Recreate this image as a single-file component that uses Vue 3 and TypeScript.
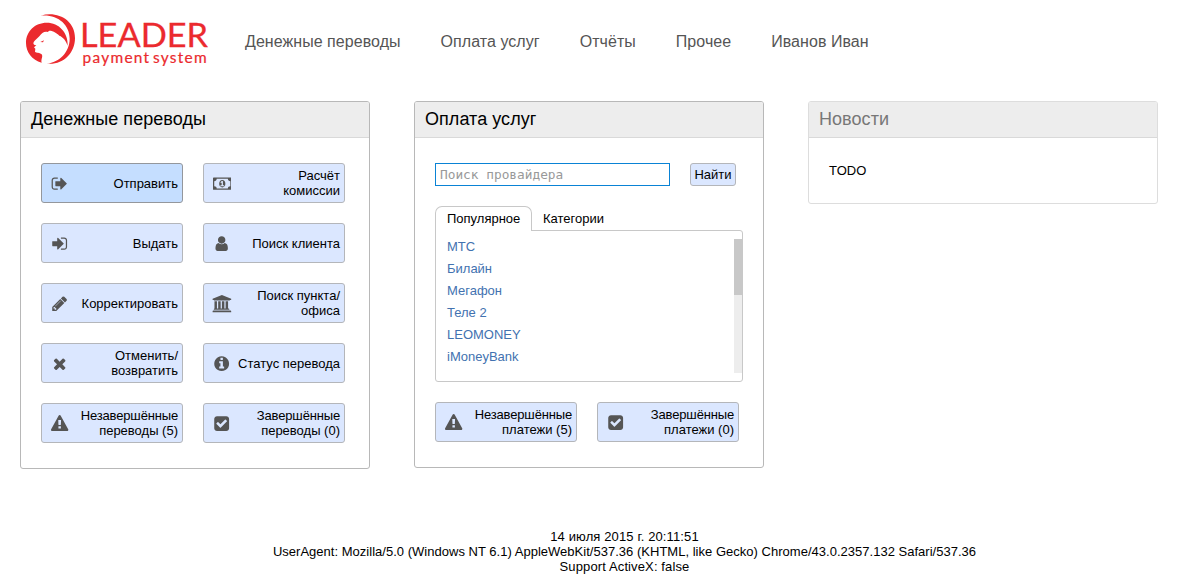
<script setup lang="ts">
interface Action {
  icon: string
  lines: string[]
  active?: boolean
  tight?: boolean
}

const menu: string[] = ['Денежные переводы', 'Оплата услуг', 'Отчёты', 'Прочее', 'Иванов Иван']

const icons: Record<string, { box: string; width: number; d: string }> = {
  signOut: { box: '0 0 1792 1792', width: 17.33, d: 'M704 1440q0 4 1 20t.5 26.5-3 23.5-10 19.5-20.5 6.5h-320q-119 0-203.5-84.5t-84.5-203.5v-704q0-119 84.5-203.5t203.5-84.5h320q13 0 22.5 9.5t9.5 22.5q0 4 1 20t.5 26.5-3 23.5-10 19.5-20.5 6.5h-320q-66 0-113 47t-47 113v704q0 66 47 113t113 47h312l11.5 1 11.5 3 8 5.5 7 9 2 13.5zm928-544q0 26-19 45l-544 544q-19 19-45 19t-45-19-19-45v-288h-448q-26 0-45-19t-19-45v-384q0-26 19-45t45-19h448v-288q0-26 19-45t45-19 45 19l544 544q19 19 19 45z' },
  signIn: { box: '0 0 1792 1792', width: 17.33, d: 'M1312 896q0 26-19 45l-544 544q-19 19-45 19t-45-19-19-45v-288h-448q-26 0-45-19t-19-45v-384q0-26 19-45t45-19h448v-288q0-26 19-45t45-19 45 19l544 544q19 19 19 45zm352-352v704q0 119-84.5 203.5t-203.5 84.5h-320q-13 0-22.5-9.5t-9.5-22.5q0-4-1-20t-.5-26.5 3-23.5 10-19.5 20.5-6.5h320q66 0 113-47t47-113v-704q0-66-47-113t-113-47h-312l-11.5-1-11.5-3-8-5.5-7-9-2-13.5q0-4-1-20t-.5-26.5 3-23.5 10-19.5 20.5-6.5h320q119 0 203.5 84.5t84.5 203.5z' },
  pencil: { box: '0 0 1792 1792', width: 17.33, d: 'M491 1536l91-91-235-235-91 91v107h128v128h107zm523-928q0-22-22-22-10 0-17 7l-542 542q-7 7-7 17 0 22 22 22 10 0 17-7l542-542q7-7 7-17zm-54-192l416 416-832 832h-416v-416zm683 96q0 53-37 90l-166 166-416-416 166-165q36-38 90-38 53 0 91 38l235 234q37 39 37 91z' },
  times: { box: '0 0 1792 1792', width: 17.33, d: 'M1490 1322q0 40-28 68l-136 136q-28 28-68 28t-68-28l-294-294-294 294q-28 28-68 28t-68-28l-136-136q-28-28-28-68t28-68l294-294-294-294q-28-28-28-68t28-68l136-136q28-28 68-28t68 28l294 294 294-294q28-28 68-28t68 28l136 136q28 28 28 68t-28 68l-294 294 294 294q28 28 28 68z' },
  warning: { box: '0 0 1792 1792', width: 17.33, d: 'M1024 1375v-190q0-14-9.5-23.5t-22.5-9.5h-192q-13 0-22.5 9.5t-9.5 23.5v190q0 14 9.5 23.5t22.5 9.5h192q13 0 22.5-9.5t9.5-23.5zm-2-374l18-459q0-12-10-19-13-11-24-11h-220q-11 0-24 11-10 7-10 21l17 457q0 10 10 16.5t24 6.5h185q14 0 23.5-6.5t10.5-16.5zm-14-934l768 1408q35 63-2 126-17 29-46.5 46t-63.5 17h-1536q-34 0-63.5-17t-46.5-46q-37-63-2-126l768-1408q17-31 47-49t65-18 65 18 47 49z' },
  info: { box: '0 0 1792 1792', width: 17.33, d: 'M1152 1376v-160q0-14-9-23t-23-9h-96v-512q0-14-9-23t-23-9h-320q-14 0-23 9t-9 23v160q0 14 9 23t23 9h96v320h-96q-14 0-23 9t-9 23v160q0 14 9 23t23 9h448q14 0 23-9t9-23zm-128-896v-160q0-14-9-23t-23-9h-192q-14 0-23 9t-9 23v160q0 14 9 23t23 9h192q14 0 23-9t9-23zm640 416q0 209-103 385.5t-279.5 279.5-385.5 103-385.5-103-279.5-279.5-103-385.5 103-385.5 279.5-279.5 385.5-103 385.5 103 279.5 279.5 103 385.5z' },
  check: { box: '0 0 1792 1792', width: 17.33, d: 'M813 1299l614-614q19-19 19-45t-19-45l-102-102q-19-19-45-19t-45 19l-467 467-211-211q-19-19-45-19t-45 19l-102 102q-19 19-19 45t19 45l358 358q19 19 45 19t45-19zm851-883v960q0 119-84.5 203.5t-203.5 84.5h-960q-119 0-203.5-84.5t-84.5-203.5v-960q0-119 84.5-203.5t203.5-84.5h960q119 0 203.5 84.5t84.5 203.5z' },
  user: { box: '0 0 1792 1792', width: 17.33, d: 'M1536 1399q0 109-62.5 187t-150.5 78h-854q-88 0-150.5-78t-62.5-187q0-85 8.5-160.5t31.5-152 58.5-131 94-89 134.5-34.5q131 128 313 128t313-128q76 0 134.5 34.5t94 89 58.5 131 31.5 152 8.5 160.5zm-256-887q0 159-112.5 271.5t-271.5 112.5-271.5-112.5-112.5-271.5 112.5-271.5 271.5-112.5 271.5 112.5 112.5 271.5z' },
  money: { box: '0 0 1920 1792', width: 18.57, d: 'M64 256h1792q26 0 45 19t19 45v1152q0 26-19 45t-45 19H64q-26 0-45-19t-19-45V320q0-26 19-45t45-19zM384 384q0 106-75 181t-181 75v512q106 0 181 75t75 181h1152q0-106 75-181t181-75V640q-106 0-181-75t-75-181zM960 512q150 0 235 115t85 269-85 269-235 115-235-115-85-269 85-269 235-115zM768 1152h384v-96h-128V608H910L762 745l77 80q42-37 55-57h2v288H768z' },
  bank: { box: '0 0 2048 1792', width: 19.8, d: 'M1024 0l960 384v128h-128q0 26-20.500 45t-48.500 19H261q-28 0-48.500-19T192 512H64V384zM256 640h256v768h128V640h256v768h128V640h256v768h128V640h256v768h59q28 0 48.500 19t20.500 45v64H192v-64q0-26 20.500-45t48.500-19h-5zM1915 1600q28 0 48.500 19t20.500 45v128H64v-128q0-26 20.500-45t48.500-19z' },
}

const transfers: Action[] = [
  { icon: 'signOut', lines: ['Отправить'], active: true },
  { icon: 'money', lines: ['Расчёт', 'комиссии'] },
  { icon: 'signIn', lines: ['Выдать'] },
  { icon: 'user', lines: ['Поиск клиента'] },
  { icon: 'pencil', lines: ['Корректировать'] },
  { icon: 'bank', lines: ['Поиск пункта/', 'офиса'] },
  { icon: 'times', lines: ['Отменить/', 'возвратить'] },
  { icon: 'info', lines: ['Статус перевода'] },
  { icon: 'warning', lines: ['Незавершённые', 'переводы (5)'], tight: true },
  { icon: 'check', lines: ['Завершённые', 'переводы (0)'], tight: true },
]

const payments: Action[] = [
  { icon: 'warning', lines: ['Незавершённые', 'платежи (5)'], tight: true },
  { icon: 'check', lines: ['Завершённые', 'платежи (0)'], tight: true },
]

const providers: string[] = ['МТС', 'Билайн', 'Мегафон', 'Теле 2', 'LEOMONEY', 'iMoneyBank']
</script>

<template>
  <div class="page">
    <header class="top">
      <svg class="logo" width="190" height="60" viewBox="0 0 190 60">
        <g transform="scale(.33333)" fill="#eb2a2e">
          <path d="M65 158C36 151 18 125 18 99C18 64 45 38 80 38C117 38 145 68 143 107C138 92 129 81 118 77C111 70 101 62 88 62L83 66C73 63 65 69 58 79L44 92C39 97 39 103 44 105L49 106L42 112L46 116L45 125C50 130 58 126 65 133C70 140 62 148 65 158Z" />
          <path d="M62 17C112 2 165 30 165 84C165 130 129 166 80 161C119 157 149 125 149 86C149 43 112 12 62 17Z" />
          <path d="M61 96L72 91L69 97Z" />
        </g>
        <text class="brand" x="60" y="37" textLength="128" lengthAdjust="spacingAndGlyphs">LEADER</text>
        <text class="tagline" x="62.500" y="53" textLength="125.500" lengthAdjust="spacingAndGlyphs">payment system</text>
      </svg>
      <nav class="menu">
        <a v-for="item in menu" :key="item">{{ item }}</a>
      </nav>
    </header>

    <main class="columns">
      <section class="panel">
        <h2>Денежные переводы</h2>
        <div class="content">
          <div class="actions">
            <button v-for="a in transfers" :key="a.lines.join()" class="action" :class="{ active: a.active, tight: a.tight }">
              <span class="icon"><svg :width="icons[a.icon].width" height="17.33" :viewBox="icons[a.icon].box"><path fill-rule="evenodd" :d="icons[a.icon].d" /></svg></span>
              <span class="label"><span v-for="l in a.lines" :key="l">{{ l }}</span></span>
            </button>
          </div>
        </div>
      </section>

      <section class="panel">
        <h2>Оплата услуг</h2>
        <div class="content">
          <div class="search">
            <input type="text" placeholder="Поиск провайдера" />
            <button class="find">Найти</button>
          </div>
          <div class="tabs">
            <span class="tab selected">Популярное</span>
            <span class="tab">Категории</span>
          </div>
          <div class="providers">
            <ul>
              <li v-for="p in providers" :key="p">{{ p }}</li>
            </ul>
            <div class="track"><div class="thumb"></div></div>
          </div>
          <div class="actions">
            <button v-for="a in payments" :key="a.lines.join()" class="action" :class="{ tight: a.tight }">
              <span class="icon"><svg :width="icons[a.icon].width" height="17.33" :viewBox="icons[a.icon].box"><path fill-rule="evenodd" :d="icons[a.icon].d" /></svg></span>
              <span class="label"><span v-for="l in a.lines" :key="l">{{ l }}</span></span>
            </button>
          </div>
        </div>
      </section>

      <section class="panel muted">
        <h2>Новости</h2>
        <div class="content news">TODO</div>
      </section>
    </main>

    <footer class="footer">
      <div class="spaced">14 июля 2015 г. 20:11:51</div>
      <div class="agent">UserAgent: Mozilla/5.0 (Windows NT 6.1) AppleWebKit/537.36 (KHTML, like Gecko) Chrome/43.0.2357.132 Safari/537.36</div>
      <div class="spaced">Support ActiveX: false</div>
    </footer>
  </div>
</template>

<style>
body {
  background: #fff;
  overflow: hidden;
}
</style>

<style scoped>
.page {
  width: 1179px;
  height: 581px;
  box-sizing: border-box;
  overflow: hidden;
  font: 13px/15px "Liberation Sans", Arial, sans-serif;
  color: #000;
}
.top {
  display: flex;
  height: 101px;
  box-sizing: border-box;
  padding: 10px 0 0 20px;
}
.logo {
  flex: none;
}
.brand {
  font: 33.5px Lato, sans-serif;
  fill: #eb2a2e;
  stroke: #eb2a2e;
  stroke-width: 0.3px;
}
.tagline {
  font: 14.5px Lato, sans-serif;
  letter-spacing: 1.2px;
  word-spacing: -2.5px;
  fill: #eb2a2e;
  stroke: #eb2a2e;
  stroke-width: 0.2px;
}
.menu {
  display: flex;
  gap: 40px;
  padding: 23px 0 0 35px;
  font-size: 16px;
  line-height: 18px;
  letter-spacing: 0.05px;
  color: #555;
  white-space: nowrap;
}
.columns {
  display: flex;
  align-items: flex-start;
  gap: 44px;
  padding-left: 20px;
  height: 428px;
}
.panel {
  width: 350px;
  box-sizing: border-box;
  border: 1px solid #b8b8b8;
  border-radius: 3px;
}
.panel h2 {
  margin: 0;
  height: 36px;
  box-sizing: border-box;
  padding-left: 10px;
  background: #ededed;
  border-bottom: 1px solid #d9d9d9;
  border-radius: 2px 2px 0 0;
  font-size: 18px;
  font-weight: 400;
  line-height: 34px;
  letter-spacing: 0.05px;
}
.content {
  padding: 25px 20px;
}
.muted {
  border-color: #ddd;
}
.muted h2 {
  color: #777;
}
.news {
  height: 65px;
  box-sizing: border-box;
}
.actions {
  display: grid;
  grid-template-columns: 142px 142px;
  gap: 20px;
}
.action,
.find {
  box-sizing: border-box;
  border: 1px solid #b4b6ba;
  border-radius: 3px;
  background: #dbe7ff;
  color: #000;
  font: inherit;
}
.action {
  display: flex;
  align-items: center;
  height: 40px;
  padding: 0 4px 0 0;
}
.action.active {
  background: #c5deff;
  border-color: #94979c;
}
.icon {
  display: flex;
  flex: none;
  justify-content: center;
  width: 36px;
  padding-top: 2px;
}
.icon svg {
  flex: none;
  fill: #555;
}
.label {
  display: flex;
  flex: 1;
  flex-direction: column;
  align-items: flex-end;
  margin-left: -6px;
  white-space: nowrap;
}
.tight .label span:first-child {
  letter-spacing: -0.16px;
}
.search {
  display: flex;
  gap: 20px;
}
.search input {
  width: 235px;
  height: 23px;
  box-sizing: border-box;
  margin: 0;
  padding: 0 4px;
  border: 1px solid #0a83d5;
  border-radius: 0;
  outline: none;
  font: 12.8px "DejaVu Sans Mono", monospace;
}
.search input::placeholder {
  color: #999;
}
.find {
  width: 46px;
  height: 23px;
  padding: 0;
}
.tabs {
  display: flex;
  height: 24px;
  margin-top: 20px;
}
.tab {
  box-sizing: border-box;
  height: 25px;
  padding: 5px 11px 0;
  line-height: 15px;
}
.tab.selected {
  position: relative;
  width: 97px;
  padding-top: 4px;
  border: 1px solid #c8c8c8;
  border-bottom: 0;
  border-radius: 7px 7px 0 0;
  background: #fff;
}
.providers {
  display: flex;
  justify-content: space-between;
  width: 308px;
  height: 152px;
  box-sizing: border-box;
  margin-bottom: 20px;
  padding: 8px 0;
  border: 1px solid #c8c8c8;
  border-radius: 0 3px 3px 3px;
}
.providers ul {
  margin: -3px 0 0;
  padding: 0 0 0 11px;
  list-style: none;
  line-height: 22px;
  color: #4272b0;
}
.track {
  width: 8px;
  height: 134px;
  background: #ededed;
}
.thumb {
  height: 56px;
  background: #c8c8c8;
}
.footer {
  margin-left: 70px;
  text-align: center;
}
.agent {
  letter-spacing: 0.018px;
}
.spaced {
  letter-spacing: 0.12px;
}
</style>
